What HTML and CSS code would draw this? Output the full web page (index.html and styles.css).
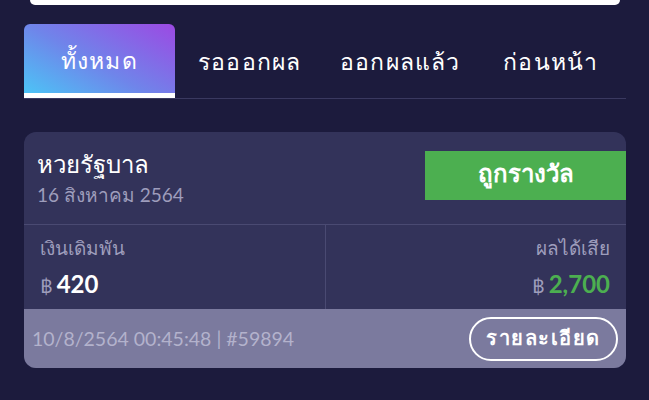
FILE: index.html
```html
<!DOCTYPE html>
<html lang="th">
<head>
<meta charset="utf-8">
<link rel="stylesheet" href="styles.css">
</head>
<body>
<div class="page">
  <div class="topbar"></div>
  <nav class="tabs">
    <div class="tab active">ทั้งหมด</div>
    <div class="tab">รอออกผล</div>
    <div class="tab">ออกผลแล้ว</div>
    <div class="tab">ก่อนหน้า</div>
  </nav>
  <section class="card">
    <div class="card-head">
      <div class="head-text">
        <div class="title">หวยรัฐบาล</div>
        <div class="date">16 สิงหาคม 2564</div>
      </div>
      <div class="badge">ถูกรางวัล</div>
    </div>
    <div class="card-mid">
      <div class="col">
        <div class="label">เงินเดิมพัน</div>
        <div class="amount"><span class="cur">฿</span> <span class="val">420</span></div>
      </div>
      <div class="col right">
        <div class="label">ผลได้เสีย</div>
        <div class="amount"><span class="cur">฿</span> <span class="val win">2,700</span></div>
      </div>
    </div>
    <div class="card-foot">
      <div class="meta">10/8/2564 00:45:48 | #59894</div>
      <div class="btn">รายละเอียด</div>
    </div>
  </section>
</div>
</body>
</html>
```
FILE: styles.css
```css
* { box-sizing: border-box; }
html, body { margin: 0; padding: 0; }
body {
  background: #1c1b3d;
  font-family: Lato, "Noto Sans", sans-serif;
  width: 649px;
  height: 400px;
  overflow: hidden;
}
.page { padding: 0 23px 0 24px; }
.topbar {
  height: 5px;
  margin: 0 6px 0 6px;
  background: #ffffff;
  border-radius: 0 0 8px 8px;
}
.tabs {
  margin-top: 19px;
  display: flex;
  border-bottom: 1px solid #3a3960;
  height: 75px;
}
.tab {
  flex: 1;
  display: flex;
  align-items: center;
  justify-content: center;
  color: #ffffff;
  font-size: 23px;
  letter-spacing: 1.2px;
  padding-top: 1px;
}
.tab.active {
  background: linear-gradient(30deg, #4cc4f6 0%, #6f85ea 45%, #9c49e3 100%);
  border-radius: 6px 6px 0 0;
  border-bottom: 5px solid #ffffff;
  padding-top: 5px;
}
.card {
  margin-top: 33px;
  background: #33335a;
  border-radius: 12px;
  overflow: hidden;
}
.card-head {
  display: flex;
  justify-content: space-between;
  align-items: flex-start;
  height: 93px;
  border-bottom: 1px solid #4a4a72;
}
.head-text { padding: 17px 0 0 13px; }
.title { color: #ffffff; font-size: 24px; line-height: 30px; }
.date { color: #9e9dbc; font-size: 19px; line-height: 24px; margin-top: 4px; }
.badge {
  margin-top: 19px;
  width: 201px;
  height: 49px;
  background: #4caf50;
  color: #ffffff;
  font-size: 24px;
  font-weight: 700;
  display: flex;
  align-items: center;
  justify-content: center;
  padding-bottom: 4px;
}
.card-mid {
  display: flex;
  height: 84px;
}
.col {
  flex: 1;
  padding: 10px 16px 0 16px;
}
.col:first-child { border-right: 1px solid #4a4a72; }
.col.right { text-align: right; padding-right: 16px; }
.label { color: #9e9dbc; font-size: 19px; line-height: 26px; }
.amount { margin-top: 9px; line-height: 28px; }
.cur { color: #9e9dbc; font-size: 19px; }
.val { color: #ffffff; font-size: 24px; font-weight: 700; }
.val.win { color: #4caf50; }
.card-foot {
  background: #7b7a9e;
  height: 59px;
  display: flex;
  align-items: center;
  justify-content: space-between;
  padding: 0 8px 0 8px;
}
.meta { color: #b3b2cc; font-size: 19.5px; }
.btn {
  width: 149px;
  height: 44px;
  border: 2px solid #ffffff;
  border-radius: 22px;
  color: #ffffff;
  font-size: 20px;
  font-weight: 700;
  letter-spacing: 1.5px;
  display: flex;
  align-items: center;
  justify-content: center;
  padding-bottom: 2px;
}
```
